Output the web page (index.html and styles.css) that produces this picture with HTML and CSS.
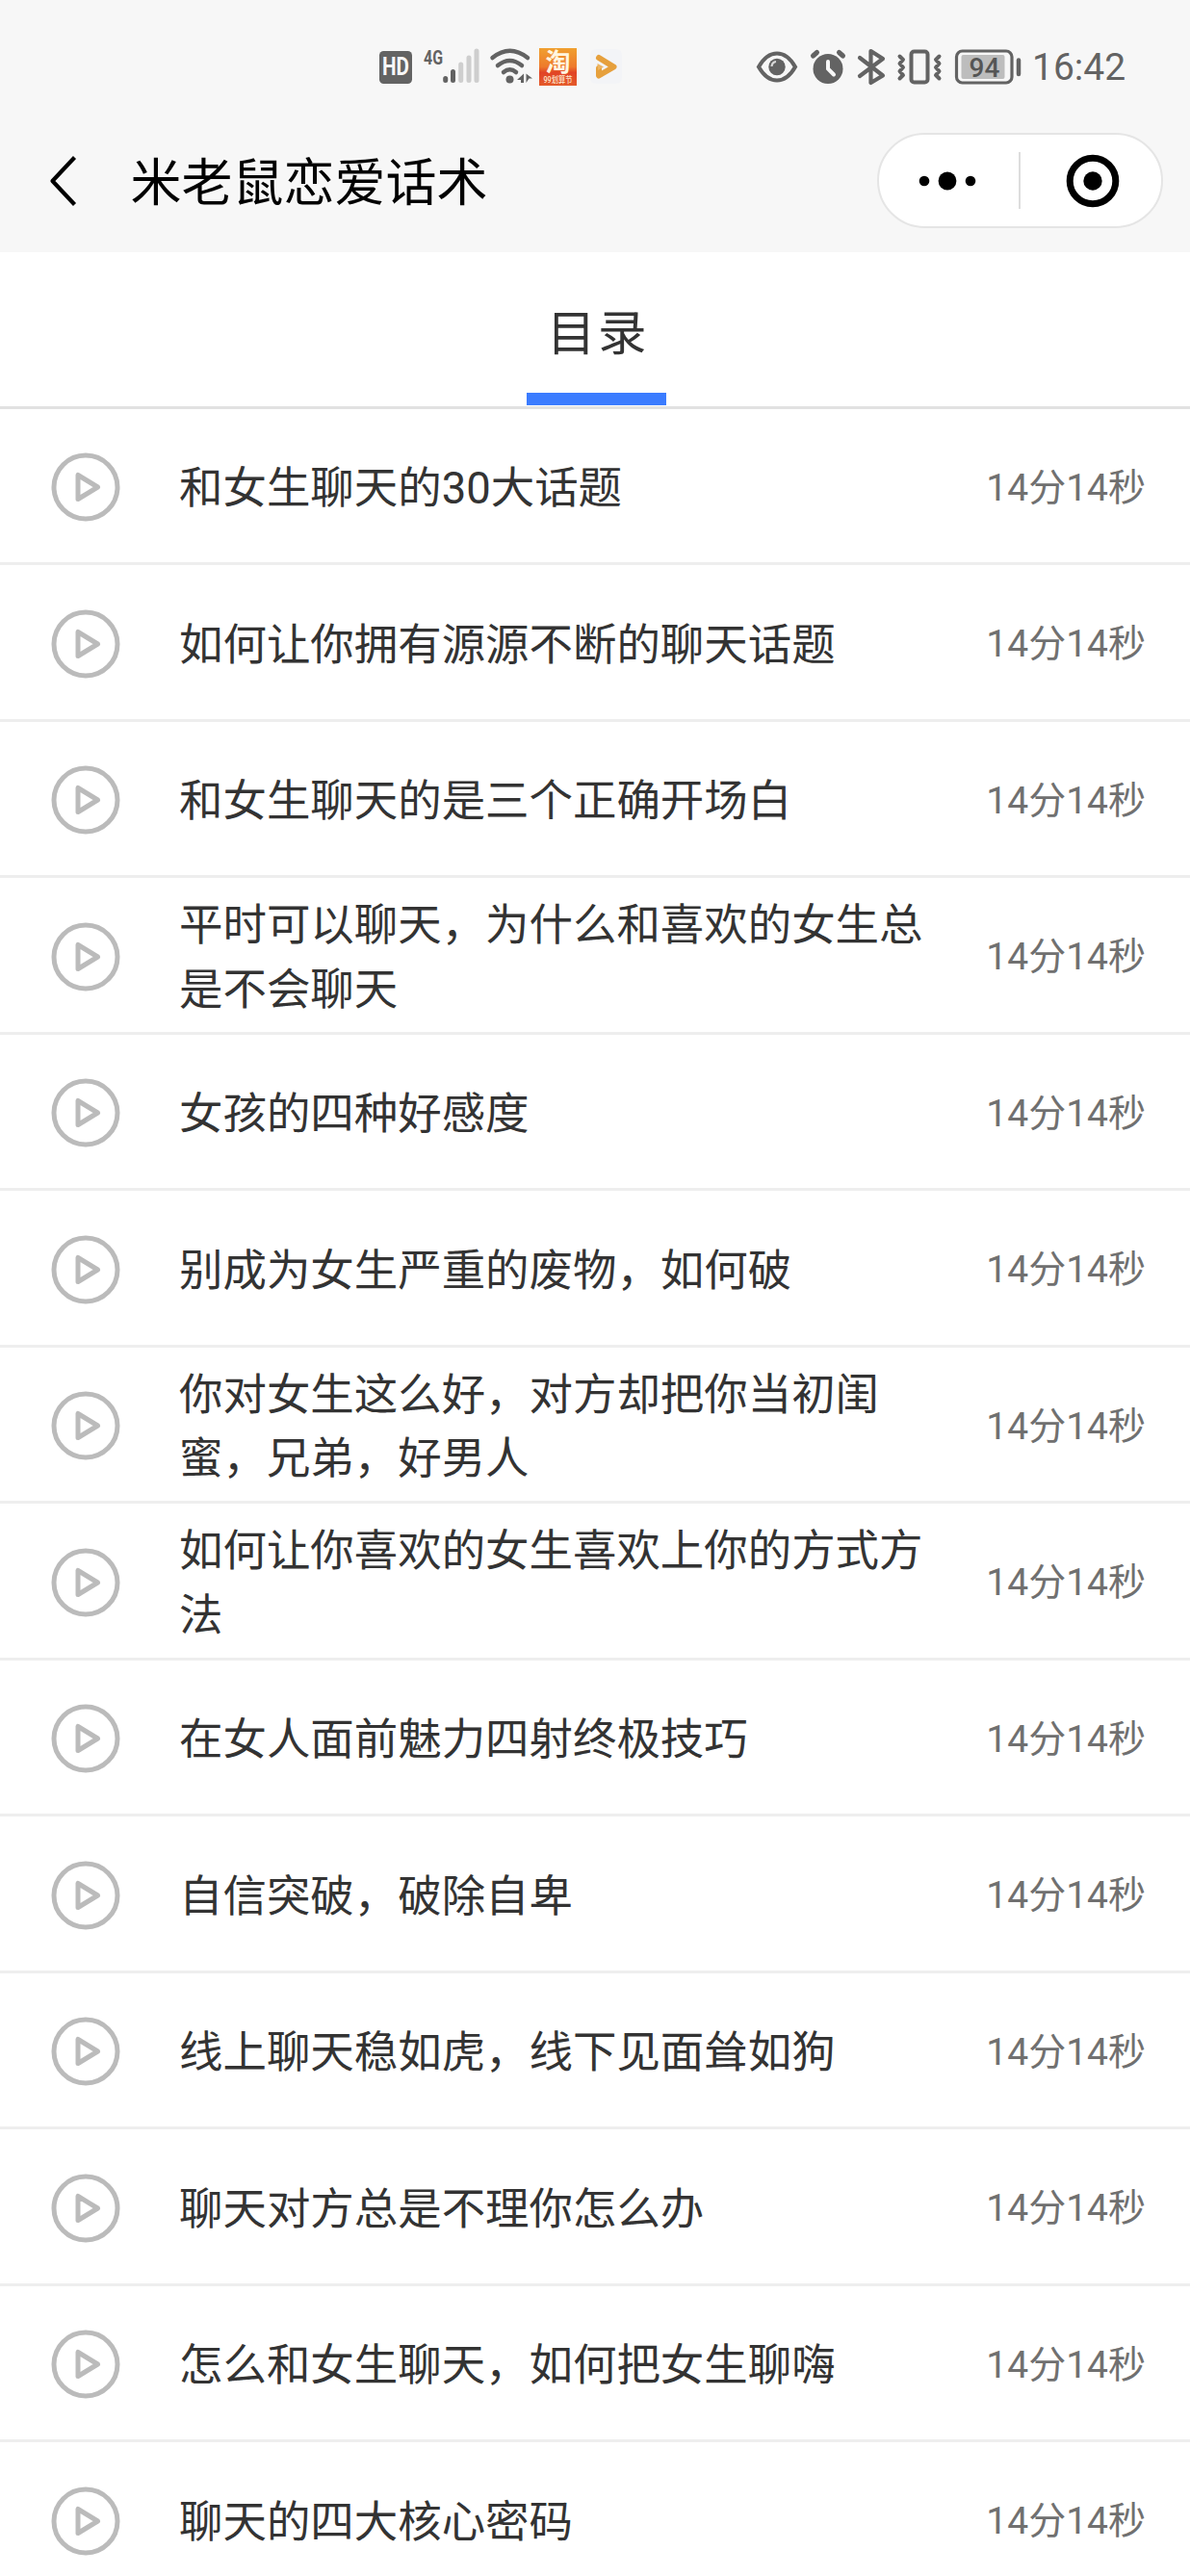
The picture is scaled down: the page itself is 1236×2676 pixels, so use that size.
FILE: index.html
```html
<!DOCTYPE html>
<html lang="zh-CN">
<head>
<meta charset="utf-8">
<title>米老鼠恋爱话术</title>
<link rel="stylesheet" href="styles.css">
</head>
<body>
<svg class="defs" width="0" height="0">
  <symbol id="play" viewBox="0 0 72 72">
    <circle cx="36" cy="36" r="33" fill="none" stroke="#bbb" stroke-width="5"/>
    <path d="M28 23.500V48.500L48.500 36Z" fill="none" stroke="#bbb" stroke-width="5" stroke-linejoin="round"/>
  </symbol>
</svg>
<header class="header">
  <div class="status">
    <div class="status-left">
      <svg width="34" height="40" viewBox="394 50 34 40"><rect x="394" y="53" width="34" height="34" rx="4.500" fill="#636363"/><text class="hd" x="411" y="78" text-anchor="middle" textLength="28" lengthAdjust="spacingAndGlyphs">HD</text></svg>
      <svg width="58" height="40" viewBox="440 50 58 40"><text class="g4" x="440" y="66.500" textLength="20" lengthAdjust="spacingAndGlyphs">4G</text>
        <g stroke-width="5" stroke-linecap="round"><path d="M462.700 81.500V83.500M470.500 74.500V83.500" stroke="#636363"/><path d="M478.700 67V83.500M487 60V83.500M495 53V83.500" stroke="#cecece"/></g></svg>
      <svg width="44" height="40" viewBox="509 50 44 40"><g fill="none" stroke="#636363" stroke-width="4.500" stroke-linecap="round"><path d="M511.500 60Q529.500 45.500 548 60M517 68Q529.500 58 542 68M523 75Q529.500 69.500 536 75"/></g><circle cx="529.500" cy="82.500" r="4" fill="#636363"/><path d="M544 76.500V86H541V83H537Z M546.500 86V76.500L553 81.500H549.500Z" fill="#636363"/></svg>
      <svg width="39" height="40" viewBox="560 50 39 40">
        <defs><linearGradient id="tb" x1="0" y1="0" x2="0" y2="1"><stop offset="0" stop-color="#f0a02f"/><stop offset=".5" stop-color="#ee7a2c"/><stop offset=".65" stop-color="#e14426"/><stop offset="1" stop-color="#e45a2a"/></linearGradient></defs>
        <rect x="560" y="50" width="39" height="39" fill="url(#tb)"/><text class="tao" x="579.500" y="74" text-anchor="middle">淘</text><text class="fest" x="579.500" y="86" text-anchor="middle" textLength="30" lengthAdjust="spacingAndGlyphs">99划算节</text></svg>
      <svg width="36" height="40" viewBox="612 50 36 40"><rect x="613" y="51" width="33" height="36" rx="6" fill="#f3f4f7"/><path d="M622 60L637.500 69.500L622 78.500V71" fill="none" stroke="#e6a03d" stroke-width="6" stroke-linejoin="round" stroke-linecap="round"/><path d="M620.500 66L627 69.500L621 73Z" fill="#ecb462"/></svg>
    </div>
    <div class="status-right">
      <svg width="42" height="40" viewBox="786 50 42 40"><path d="M788 69.500Q796 55.500 807 55.500T826 69.500Q818 83.500 807 83.500T788 69.500Z" fill="none" stroke="#636363" stroke-width="4"/><circle cx="807" cy="69.500" r="8.700" fill="#636363"/><path d="M801.500 69Q802 64.500 806 64" fill="none" stroke="#d8d8d8" stroke-width="2.200"/></svg>
      <svg class="alarm" width="38" height="40" viewBox="841 50 38 40"><circle cx="860" cy="71.500" r="15.500" fill="#636363"/><path d="M844.500 58L848.500 54.500M875.500 58L871.500 54.500" stroke="#636363" stroke-width="5" stroke-linecap="round"/><path d="M860 64V71.500L866 77.500" fill="none" stroke="#f7f7f7" stroke-width="4" stroke-linecap="round"/></svg>
      <svg class="bluetooth" width="30" height="40" viewBox="891 50 30 40"><path d="M893 60L917 78.500L904.500 86V53L917 61L893 79" fill="none" stroke="#636363" stroke-width="4.200" stroke-linejoin="round" stroke-linecap="round"/></svg>
      <svg class="vibrate" width="46" height="40" viewBox="932 50 46 40"><rect x="946.500" y="53.500" width="17" height="32" rx="3" fill="none" stroke="#636363" stroke-width="4"/><path d="M934.500 58.500L938 62L934.500 66L938 70L934.500 74L938 78L934.500 81.500M975.500 58.500L972 62L975.500 66L972 70L975.500 74L972 78L975.500 81.500" fill="none" stroke="#636363" stroke-width="4" stroke-linecap="round" stroke-linejoin="round"/></svg>
      <svg width="69" height="40" viewBox="992 50 69 40"><rect x="993.500" y="53" width="57.500" height="33" rx="6" fill="none" stroke="#636363" stroke-width="3.200"/><rect x="998.500" y="57" width="45" height="25" rx="2" fill="#bdbdbd"/><path d="M1058 62.500V77" stroke="#636363" stroke-width="4.500" stroke-linecap="round"/><text class="batt" x="1022.500" y="80" text-anchor="middle">94</text></svg>
      <span class="clock">16:42</span>
    </div>
  </div>
  <div class="nav">
    <svg class="back" width="30" height="56" viewBox="0 0 30 56"><path d="M26.500 3.500L3.500 28L26.500 52.500" fill="none" stroke="#000" stroke-width="4.200" stroke-linejoin="round"/></svg>
    <h1 class="title">米老鼠恋爱话术</h1>
    <div class="capsule">
      <svg width="60" height="60" viewBox="0 0 60 60"><circle cx="6" cy="30" r="5.300"/><circle cx="30" cy="30" r="9.400"/><circle cx="54" cy="30" r="5.300"/></svg>
      <i class="divider"></i>
      <svg width="56" height="56" viewBox="0 0 56 56"><circle cx="28" cy="28" r="23.800" fill="none" stroke="#000" stroke-width="7"/><circle cx="28" cy="28" r="9.700"/></svg>
    </div>
  </div>
</header>
<div class="tabs"><div class="tab">目录</div></div>
<ul class="list">
  <li class="row"><svg class="play"><use href="#play"/></svg><p class="name">和女生聊天的30大话题</p><span class="time">14分14秒</span></li>
  <li class="row"><svg class="play"><use href="#play"/></svg><p class="name">如何让你拥有源源不断的聊天话题</p><span class="time">14分14秒</span></li>
  <li class="row"><svg class="play"><use href="#play"/></svg><p class="name">和女生聊天的是三个正确开场白</p><span class="time">14分14秒</span></li>
  <li class="row"><svg class="play"><use href="#play"/></svg><p class="name">平时可以聊天，为什么和喜欢的女生总是不会聊天</p><span class="time">14分14秒</span></li>
  <li class="row"><svg class="play"><use href="#play"/></svg><p class="name">女孩的四种好感度</p><span class="time">14分14秒</span></li>
  <li class="row"><svg class="play"><use href="#play"/></svg><p class="name">别成为女生严重的废物，如何破</p><span class="time">14分14秒</span></li>
  <li class="row"><svg class="play"><use href="#play"/></svg><p class="name">你对女生这么好，对方却把你当初闺蜜，兄弟，好男人</p><span class="time">14分14秒</span></li>
  <li class="row"><svg class="play"><use href="#play"/></svg><p class="name">如何让你喜欢的女生喜欢上你的方式方法</p><span class="time">14分14秒</span></li>
  <li class="row"><svg class="play"><use href="#play"/></svg><p class="name">在女人面前魅力四射终极技巧</p><span class="time">14分14秒</span></li>
  <li class="row"><svg class="play"><use href="#play"/></svg><p class="name">自信突破，破除自卑</p><span class="time">14分14秒</span></li>
  <li class="row"><svg class="play"><use href="#play"/></svg><p class="name">线上聊天稳如虎，线下见面耸如狗</p><span class="time">14分14秒</span></li>
  <li class="row"><svg class="play"><use href="#play"/></svg><p class="name">聊天对方总是不理你怎么办</p><span class="time">14分14秒</span></li>
  <li class="row"><svg class="play"><use href="#play"/></svg><p class="name">怎么和女生聊天，如何把女生聊嗨</p><span class="time">14分14秒</span></li>
  <li class="row"><svg class="play"><use href="#play"/></svg><p class="name">聊天的四大核心密码</p><span class="time">14分14秒</span></li>
</ul>
</body>
</html>
```
FILE: styles.css
```css
* { box-sizing: border-box; }
html, body { height: 2676px; overflow: hidden; }
body {
  margin: 0;
  background: #fff;
  color: #333;
  font-family: Roboto, "Noto Sans CJK SC", sans-serif;
}
svg { flex: none; display: block; overflow: visible; }
.defs { position: absolute; }
.header { height: 262px; background: #f7f7f7; }
.status {
  display: flex;
  justify-content: space-between;
  height: 138px;
  padding: 50px 66px 0 394px;
}
.status-left, .status-right { display: flex; height: 40px; align-items: center; }
.status-left { gap: 12px; }
.status-left svg:nth-child(3) { margin-left: -1px; }
.status-left svg:nth-child(4) { margin-left: -5px; }
.status-left svg:nth-child(5) { margin-left: 1px; }
.status-right { gap: 13px; }
.alarm { margin-right: -1px; }
.bluetooth { margin-right: -2px; }
.vibrate { margin-right: 1px; }
.hd { font: 700 25px Roboto, sans-serif; fill: #f7f7f7; }
.g4 { font: 700 21px Roboto, sans-serif; fill: #636363; }
.tao { font: 700 26px "Noto Sans CJK SC", sans-serif; fill: #fff6e0; }
.fest { font: 500 9px Roboto, "Noto Sans CJK SC", sans-serif; fill: #fde3c8; }
.batt { font: 500 28px Roboto, sans-serif; fill: #555; }
.clock {
  width: 98px;
  margin-left: -2px;
  font-size: 39px;
  line-height: 40px;
  color: #636363;
  white-space: nowrap;
}
.nav { display: flex; align-items: center; height: 99px; padding: 0 28px 0 51px; }
.title {
  flex: 1;
  margin: 0 0 0 54.500px;
  padding-top: 6px;
  font-size: 53px;
  font-weight: 400;
  line-height: 70px;
  color: #000;
}
.capsule {
  display: flex;
  align-items: center;
  width: 297px;
  height: 99px;
  padding-left: 41px;
  background: #fff;
  border: 2px solid #e5e5e5;
  border-radius: 50px;
}
.divider { width: 2px; height: 59px; margin: 0 47px 0 44px; background: #ddd; }
.tabs {
  display: flex;
  justify-content: center;
  height: 163px;
  padding-left: 3px;
  border-bottom: 3px solid #e1e1e1;
}
.tab {
  width: 145px;
  height: 159px;
  padding-left: 3px;
  border-bottom: 13px solid #3b7cff;
  font-size: 50.500px;
  letter-spacing: 2.500px;
  line-height: 169px;
  text-align: center;
}
.list { margin: -.5px 0 0; padding: 0; list-style: none; }
.row {
  display: flex;
  align-items: center;
  height: 162.500px;
  padding: 4px 46px 0 53px;
  border-bottom: 3px solid #eee;
}
.play { width: 72px; height: 72px; }
.name {
  width: 785px;
  margin: 0 auto 0 61px;
  padding-top: 4px;
  font-size: 45.450px;
  line-height: 66.500px;
}
.time { padding-top: 1px; font-size: 39px; line-height: 60px; color: #707070; white-space: nowrap; }
```
